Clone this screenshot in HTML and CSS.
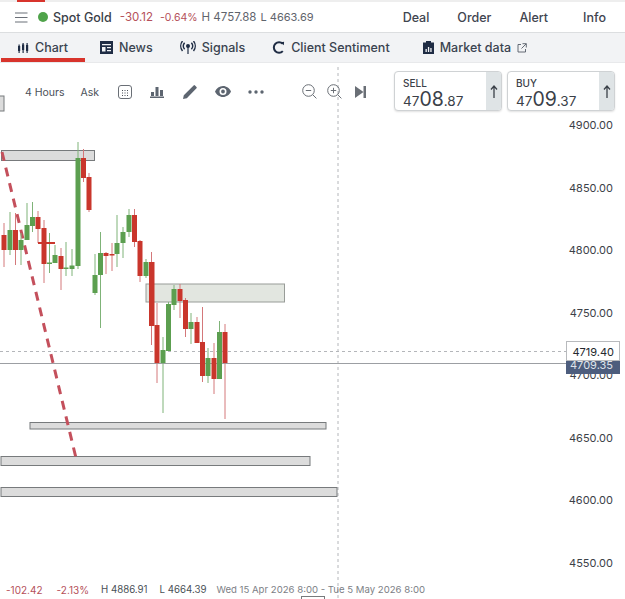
FILE: index.html
```html
<!DOCTYPE html>
<html lang="en">
<head>
    <meta charset="UTF-8">
    <meta name="viewport" content="width=device-width, initial-scale=1.0">
    <title>Spot Gold</title>
    <link rel="stylesheet" href="styles.css">
</head>
<body>
<div class="page">
    <!-- Top strip -->
    <div class="strip"><span class="strip-mark"></span></div>

    <!-- Market header -->
    <header class="market">
        <svg class="burger" width="13" height="11" viewBox="0 0 13 11"><path d="M0 1h12.5M0 5.500h12.5M0 10h12.5"/></svg>
        <span class="dot"></span>
        <span class="name">Spot Gold</span>
        <span class="neg change">-30.12</span>
        <span class="neg pct">-0.64%</span>
        <span class="hl">H 4757.88</span>
        <span class="hl low">L 4663.69</span>
        <nav class="actions">
            <a>Deal</a>
            <a>Order</a>
            <a>Alert</a>
            <a class="info">Info</a>
        </nav>
    </header>

    <!-- Tabs -->
    <nav class="tabs">
        <a class="tab active">
            <svg width="12" height="12" viewBox="0 0 12 12"><path class="ink" d="M1 4h2.200v5H1zM5 2.500h2.200v5.500H5zM9 3h2.200v6H9z"/><path class="ink-line" d="M2.100 2.500v8.500M6.100 1v10M10.100 1v10"/></svg>
            Chart
        </a>
        <a class="tab">
            <svg width="13" height="13" viewBox="0 0 13 13"><path class="ink" d="M0 0h13v13H0z"/><path class="cut" d="M2 3h9v1.300H2zM2 6h3.500v4.500H2zM7 6h4v1.200H7zM7 9h4v1.200H7z"/></svg>
            News
        </a>
        <a class="tab">
            <svg width="16" height="13" viewBox="0 0 16 13"><circle class="ink" cx="8" cy="5" r="2"/><path class="ink-line" d="M8 6v7"/><path class="wave" d="M4.600 1.800a5 5 0 0 0 0 6.400M11.400 1.800a5 5 0 0 1 0 6.400M2.500 0a8 8 0 0 0 0 10M13.500 0a8 8 0 0 1 0 10"/></svg>
            Signals
        </a>
        <a class="tab">
            <svg width="13" height="13" viewBox="0 0 13 13"><path class="ring" d="M10.800 2.900a5.200 5.200 0 1 0 0 7.200"/><path class="ink" d="M8.800 1.200l3.300-.4-.2 3.500z"/></svg>
            Client Sentiment
        </a>
        <a class="tab market-data">
            <svg width="11" height="13" viewBox="0 0 11 13"><path class="ink" d="M0 1.500h3V0h5v1.500h3V13H0z"/><path class="cut" d="M2.500 8h1.300v3H2.500zM4.900 6h1.300v5H4.900zM7.300 7h1.300v4H7.300z"/></svg>
            Market data
            <svg class="ext" width="10" height="10" viewBox="0 0 10 10"><path d="M4 1.500H1v7.500h7.500V6M5.500.7h3.800v3.800M9.200.8L4.500 5.500"/></svg>
        </a>
    </nav>

    <!-- Chart -->
    <main class="chart">
        <svg class="plot" width="625" height="536" viewBox="0 63 625 536">
            <path class="cross" d="M338 67V599M0 351.500H566"/>
            <path class="last" d="M0 363.500H566"/>

            <rect class="zone" x="-2" y="96" width="6" height="15"/>
            <rect class="zone" x="1.500" y="150.500" width="93" height="10"/>
            <rect class="zone light" x="146" y="284" width="138.500" height="18"/>
            <rect class="zone" x="30" y="422.500" width="296" height="6.500"/>
            <rect class="zone" x="1" y="456.500" width="309" height="9"/>
            <rect class="zone" x="1" y="487.500" width="336" height="9"/>

            <path class="trend" d="M2 152L76 458"/>

            <g class="up"><path d="M10 212V255"/><rect x="7.500" y="230" width="5" height="20"/></g>
            <g class="dn"><path d="M4 223V267"/><rect x="1.500" y="235" width="5" height="15"/></g>
            <g class="dn"><path d="M15.500 213V265"/><rect x="13" y="230" width="5" height="20"/></g>
            <g class="up"><path d="M21 233V265"/><rect x="18.500" y="240" width="5" height="10"/></g>
            <g class="up"><path d="M27 203V240"/><rect x="24.500" y="225" width="5" height="15"/></g>
            <g class="up"><path d="M32.500 202V232"/><rect x="30" y="217" width="5" height="9"/></g>
            <g class="dn"><path d="M38 211V243"/><rect x="35.500" y="217" width="5" height="12"/></g>
            <g class="dn"><path d="M44 220V283"/><rect x="41.500" y="228" width="5" height="36"/></g>
            <g class="up"><path d="M49.500 233V273"/><rect x="47" y="262.500" width="5" height="1.500"/></g>
            <rect class="doji" x="38" y="242" width="17" height="2"/>
            <g class="up"><path d="M55 245V263"/><rect x="52.500" y="255" width="5" height="8"/></g>
            <g class="dn"><path d="M61 248V290"/><rect x="58.500" y="256" width="5" height="13"/></g>
            <g class="up"><path d="M66 242V276"/><rect x="63.500" y="267.500" width="5" height="1.500"/></g>
            <g class="up"><path d="M72 249V276"/><rect x="69.500" y="265.500" width="5" height="3.500"/></g>
            <g class="up"><path d="M78 142V269"/><rect x="75.500" y="158" width="5" height="108"/></g>
            <g class="dn"><path d="M83.500 149V182"/><rect x="81" y="158" width="5" height="20"/></g>
            <g class="dn"><path d="M89 173V212"/><rect x="86.500" y="177" width="5" height="33"/></g>
            <g class="up"><path d="M95 254V295"/><rect x="92.500" y="275" width="5" height="18"/></g>
            <g class="up"><path d="M100.500 232V328"/><rect x="98" y="253" width="5" height="22"/></g>
            <g class="dn"><path d="M106 252V274"/><rect x="103.500" y="253" width="5" height="3"/></g>
            <g class="dn"><path d="M112 243V271"/><rect x="109.500" y="254" width="5" height="1.500"/></g>
            <g class="up"><path d="M117 215V267"/><rect x="114.500" y="243" width="5" height="11"/></g>
            <g class="up"><path d="M123 227V258"/><rect x="120.500" y="232" width="5" height="11"/></g>
            <g class="up"><path d="M129 209V237"/><rect x="126.500" y="215" width="5" height="17"/></g>
            <g class="dn"><path d="M134.500 209V247"/><rect x="132" y="215" width="5" height="27"/></g>
            <g class="dn"><path d="M140 240V282"/><rect x="137.500" y="241" width="5" height="35"/></g>
            <g class="up"><path d="M146 259V278"/><rect x="143.500" y="262" width="5" height="14"/></g>
            <g class="dn"><path d="M151.500 252V345"/><rect x="149" y="262" width="5.500" height="64"/></g>
            <g class="dn"><path d="M157 303V383"/><rect x="154.500" y="325" width="5" height="38"/></g>
            <g class="up"><path d="M163 337V413"/><rect x="160.500" y="350" width="5" height="13"/></g>
            <g class="up"><path d="M168.500 302V351"/><rect x="166" y="304" width="5" height="47"/></g>
            <g class="up"><path d="M174 285V310"/><rect x="171.500" y="289" width="5" height="16"/></g>
            <g class="dn"><path d="M180 284V318"/><rect x="177.500" y="289" width="5" height="12"/></g>
            <g class="dn"><path d="M185.500 298V337"/><rect x="183" y="300" width="5" height="29"/></g>
            <g class="up"><path d="M191 313V344"/><rect x="188.500" y="322" width="5" height="7"/></g>
            <g class="dn"><path d="M197 317V343"/><rect x="194.500" y="322" width="5" height="21"/></g>
            <g class="dn"><path d="M202.500 307V382"/><rect x="200" y="342" width="5" height="34"/></g>
            <g class="up"><path d="M208 348V383"/><rect x="205.500" y="358" width="5" height="18"/></g>
            <g class="dn"><path d="M214 343V394"/><rect x="211.500" y="358" width="5" height="21"/></g>
            <g class="up"><path d="M219.500 321V379"/><rect x="217" y="332" width="5" height="47"/></g>
            <g class="dn"><path d="M225 324V419"/><rect x="222.500" y="332" width="5" height="31"/></g>

            <g class="axis">
                <text x="613" y="129">4900.00</text>
                <text x="613" y="192">4850.00</text>
                <text x="613" y="254">4800.00</text>
                <text x="613" y="317">4750.00</text>
                <text x="613" y="379">4700.00</text>
                <text x="613" y="442">4650.00</text>
                <text x="613" y="504">4600.00</text>
                <text x="613" y="567">4550.00</text>
            </g>
            <rect class="tag-last" x="566" y="357" width="54" height="17"/>
            <text class="tag-last-text" x="613" y="369">4709.35</text>
            <rect class="tag-cross" x="566.500" y="341.500" width="53" height="19"/>
            <text class="tag-cross-text" x="614" y="355.500">4719.40</text>
            <rect class="time-tag" x="301.500" y="596.500" width="23" height="8"/>
        </svg>

        <div class="tools">
            <span class="tool-label first">4 Hours</span>
            <span class="tool-label ask">Ask</span>
            <svg class="tool calendar" width="14" height="14" viewBox="0 0 14 14"><rect class="thin" x=".5" y=".5" width="13" height="13" rx="2.500"/><path class="dots" d="M4 5h1v1H4zM6.500 5h1v1h-1zM9 5h1v1H9zM4 7.500h1v1H4zM6.500 7.500h1v1h-1zM9 7.500h1v1H9zM4 10h1v1H4zM6.500 10h1v1h-1zM9 10h1v1H9z"/></svg>
            <svg class="tool bars" width="14" height="13" viewBox="0 0 14 13"><path class="fill" d="M0 11.500h14V13H0zM1 7h3v4H1zM5.500 2h3v9h-3zM10 5h3v6h-3z"/></svg>
            <svg class="tool pencil" width="15" height="15" viewBox="0 0 15 15"><path class="fill" d="M0 15l.8-3.800L10.600 1.400a1 1 0 0 1 1.400 0l1.500 1.500a1 1 0 0 1 0 1.400L3.800 14.200z"/></svg>
            <svg class="tool eye" width="16" height="11" viewBox="0 0 16 11"><path class="fill" d="M8 0c3.600 0 6.500 2.300 8 5.500-1.500 3.200-4.400 5.500-8 5.500S1.500 8.700 0 5.500C1.500 2.300 4.400 0 8 0zm0 2a3.500 3.500 0 1 0 0 7 3.500 3.500 0 0 0 0-7zm0 1.600a1.900 1.900 0 1 1 0 3.800 1.900 1.900 0 0 1 0-3.800z"/></svg>
            <svg class="tool more" width="16" height="4" viewBox="0 0 16 4"><circle class="fill" cx="2" cy="2" r="1.700"/><circle class="fill" cx="8" cy="2" r="1.700"/><circle class="fill" cx="14" cy="2" r="1.700"/></svg>
            <svg class="tool zoom-out" width="15" height="15" viewBox="0 0 15 15"><circle class="thin" cx="6.500" cy="6.500" r="5.800"/><path class="thin" d="M3.800 6.500h5.400M10.800 10.800l3.600 3.600"/></svg>
            <svg class="tool zoom-in" width="15" height="15" viewBox="0 0 15 15"><circle class="thin" cx="6.500" cy="6.500" r="5.800"/><path class="thin" d="M3.800 6.500h5.400M6.500 3.800v5.400M10.800 10.800l3.600 3.600"/></svg>
            <svg class="tool skip" width="11" height="12" viewBox="0 0 11 12"><path class="soft" d="M0 0l8.500 6L0 12z"/><path class="soft" d="M8.500 0H11v12H8.500z"/></svg>

            <div class="quotes">
                <div class="quote">
                    <div class="quote-main">
                        <span class="quote-side">SELL</span>
                        <span class="quote-price">47<b>08</b>.87</span>
                    </div>
                    <div class="quote-arrow"><svg width="8" height="13" viewBox="0 0 8 13"><path d="M4 13V1.500M1 4.500L4 1l3 3.500"/></svg></div>
                </div>
                <div class="quote">
                    <div class="quote-main">
                        <span class="quote-side">BUY</span>
                        <span class="quote-price">47<b>09</b>.37</span>
                    </div>
                    <div class="quote-arrow"><svg width="8" height="13" viewBox="0 0 8 13"><path d="M4 13V1.500M1 4.500L4 1l3 3.500"/></svg></div>
                </div>
            </div>
        </div>

        <!-- Range summary -->
        <footer class="range">
            <span class="neg range-change">-102.42</span>
            <span class="neg range-pct">-2.13%</span>
            <span class="range-hl">H 4886.91</span>
            <span class="range-hl">L 4664.39</span>
            <span class="range-dates">Wed 15 Apr 2026 8:00 - Tue 5 May 2026 8:00</span>
        </footer>
    </main>
</div>
</body>
</html>
```

FILE: styles.css
```css
* {
    margin: 0;
    padding: 0;
    box-sizing: border-box;
}

body {
    font-family: Inter, "Noto Sans", sans-serif;
    background: white;
    color: #333a44;
    overflow: hidden;
}

.page {
    display: flex;
    flex-direction: column;
    width: 625px;
    height: 599px;
}

/* Top strip */
.strip {
    height: 2px;
    background: #eeeeee;
}

.strip-mark {
    display: block;
    width: 28px;
    height: 2px;
    margin-left: 17px;
    background: #d8342c;
}

/* Market header */
.market {
    display: flex;
    align-items: center;
    height: 31px;
    padding-left: 15px;
    background: white;
    border-bottom: 1px solid #dcdee0;
    font-size: 11.5px;
}

.burger path {
    fill: none;
    stroke: #6b7078;
    stroke-width: 1.2;
}

.dot {
    width: 10px;
    height: 10px;
    margin-left: 10px;
    border-radius: 50%;
    background: #4fa34a;
}

.name {
    margin-left: 5px;
    font-size: 12.5px;
    font-weight: 500;
    color: #3a4048;
}

.neg {
    color: #b5505a;
}

.change {
    margin-left: 8px;
}

.pct {
    margin-left: 7px;
    font-size: 10.5px;
}

.hl {
    margin-left: 4px;
    color: #5f646c;
}

.low {
    margin-left: 4px;
    font-size: 11px;
}

.actions {
    display: flex;
    gap: 28px;
    margin-left: auto;
    padding-right: 19px;
    font-size: 12.5px;
    font-weight: 500;
    color: #3f4550;
}

.info {
    margin-left: 7px;
}

/* Tabs */
.tabs {
    display: flex;
    height: 30px;
    background: #f2f3f5;
    border-bottom: 1px solid #e8e9eb;
    padding-left: 1px;
}

.tab {
    display: flex;
    align-items: center;
    gap: 6px;
    height: 29px;
    padding: 0 13px 0 14px;
    font-size: 12.5px;
    font-weight: 500;
    color: #3a4350;
}

.tab.active {
    width: 84px;
    margin-right: 1px;
    padding-left: 16px;
    border-bottom: 4px solid #d8342c;
    padding-top: 4px;
}

.market-data {
    margin-left: 6px;
}

.ink {
    fill: #1f2c44;
}

.ink-line {
    fill: none;
    stroke: #1f2c44;
    stroke-width: 1.2;
}

.cut {
    fill: #f2f3f5;
}

.wave,
.ring {
    fill: none;
    stroke: #1f2c44;
    stroke-width: 1.4;
}

.ring {
    stroke-width: 2;
}

.ext path {
    fill: none;
    stroke: #555c68;
    stroke-width: .9;
}

/* Chart */
.chart {
    position: relative;
    flex: 1;
    display: flex;
    flex-direction: column;
    justify-content: space-between;
}

.plot {
    position: absolute;
    top: 0;
    left: 0;
    font-family: Inter, "Noto Sans", sans-serif;
}

.cross {
    fill: none;
    stroke: #b4b6ba;
    stroke-dasharray: 3 3;
}

.last {
    stroke: #9c9fa3;
}

.zone {
    fill: #dcdcdc;
    stroke: #777a7c;
}

.zone.light {
    fill: #e2e6e0;
    stroke: #989c98;
}

.trend {
    fill: none;
    stroke: #c4505c;
    stroke-width: 3;
    stroke-dasharray: 9 7;
}

.up path {
    stroke: #7fb378;
}

.up rect {
    fill: #5c9f50;
}

.dn path {
    stroke: #d4787a;
}

.dn rect {
    fill: #c9362c;
}

.doji {
    fill: #c9362c;
}

.axis text,
.tag-last-text,
.tag-cross-text {
    font-size: 11px;
    text-anchor: end;
    fill: #3c4148;
}

.tag-last {
    fill: #4d5d7d;
}

.tag-last-text {
    fill: #dfe3ea;
}

.tag-cross {
    fill: white;
    stroke: #b8babd;
}

.tag-cross-text {
    fill: #24282e;
}

.time-tag {
    fill: white;
    stroke: #777a7c;
}

/* Chart toolbar */
.tools {
    position: relative;
    display: flex;
    align-items: center;
    height: 15px;
    margin-top: 21px;
}

.tool-label {
    margin-top: 2px;
    font-size: 10.5px;
    color: #4b5058;
}

.tool-label.first {
    margin-left: 25px;
}

.tool-label.ask {
    margin-left: 16px;
}

.tool {
    flex: none;
}

.calendar { margin-left: 19px; }
.bars { margin-left: 18px; }
.pencil { margin-left: 19px; }
.eye { margin-left: 17px; }
.more { margin-left: 17px; }
.zoom-out { margin-left: 38px; }
.zoom-in { margin-left: 10px; }
.skip { margin-left: 13px; }

.tool .thin {
    fill: none;
    stroke: #6a6f76;
    stroke-width: 1;
}

.tool .dots {
    fill: #4c5058;
}

.tool .fill {
    fill: #5d6570;
}

.tool .soft {
    fill: #6a6f76;
}

/* Sell and buy quotes */
.quotes {
    display: flex;
    gap: 5px;
    position: absolute;
    top: -13px;
    left: 394px;
}

.quote {
    display: flex;
    width: 108px;
    height: 40px;
    background: white;
    border: 1px solid #cfd2d4;
    border-radius: 4px;
    box-shadow: 0 1px 2px rgba(0,0,0,0.12);
    overflow: hidden;
}

.quote-main {
    flex: 1;
    padding: 5px 0 0 8px;
}

.quote-side {
    display: block;
    font-size: 10px;
    font-weight: 500;
    line-height: 12px;
    color: #3a4048;
}

.quote-price {
    display: block;
    font-size: 13.5px;
    line-height: 20px;
    color: #3a4048;
    white-space: nowrap;
}

.quote-price b {
    font-size: 19.5px;
    font-weight: 400;
}

.quote-arrow {
    display: flex;
    align-items: center;
    justify-content: center;
    width: 15px;
    background: #dfe4e6;
}

.quote-arrow path {
    fill: none;
    stroke: #3a4048;
    stroke-width: 1.3;
}

/* Range summary */
.range {
    position: relative;
    display: flex;
    align-items: center;
    height: 17px;
    margin-bottom: 1px;
    padding-left: 6px;
    font-size: 9.7px;
    white-space: nowrap;
}

.range-change,
.range-pct {
    font-size: 10px;
}

.range-pct {
    margin-left: 14px;
}

.range-hl {
    margin-left: 12px;
    color: #4a4f56;
}

.range-dates {
    margin-left: 10px;
    font-size: 9.6px;
    color: #7c8086;
}
```
